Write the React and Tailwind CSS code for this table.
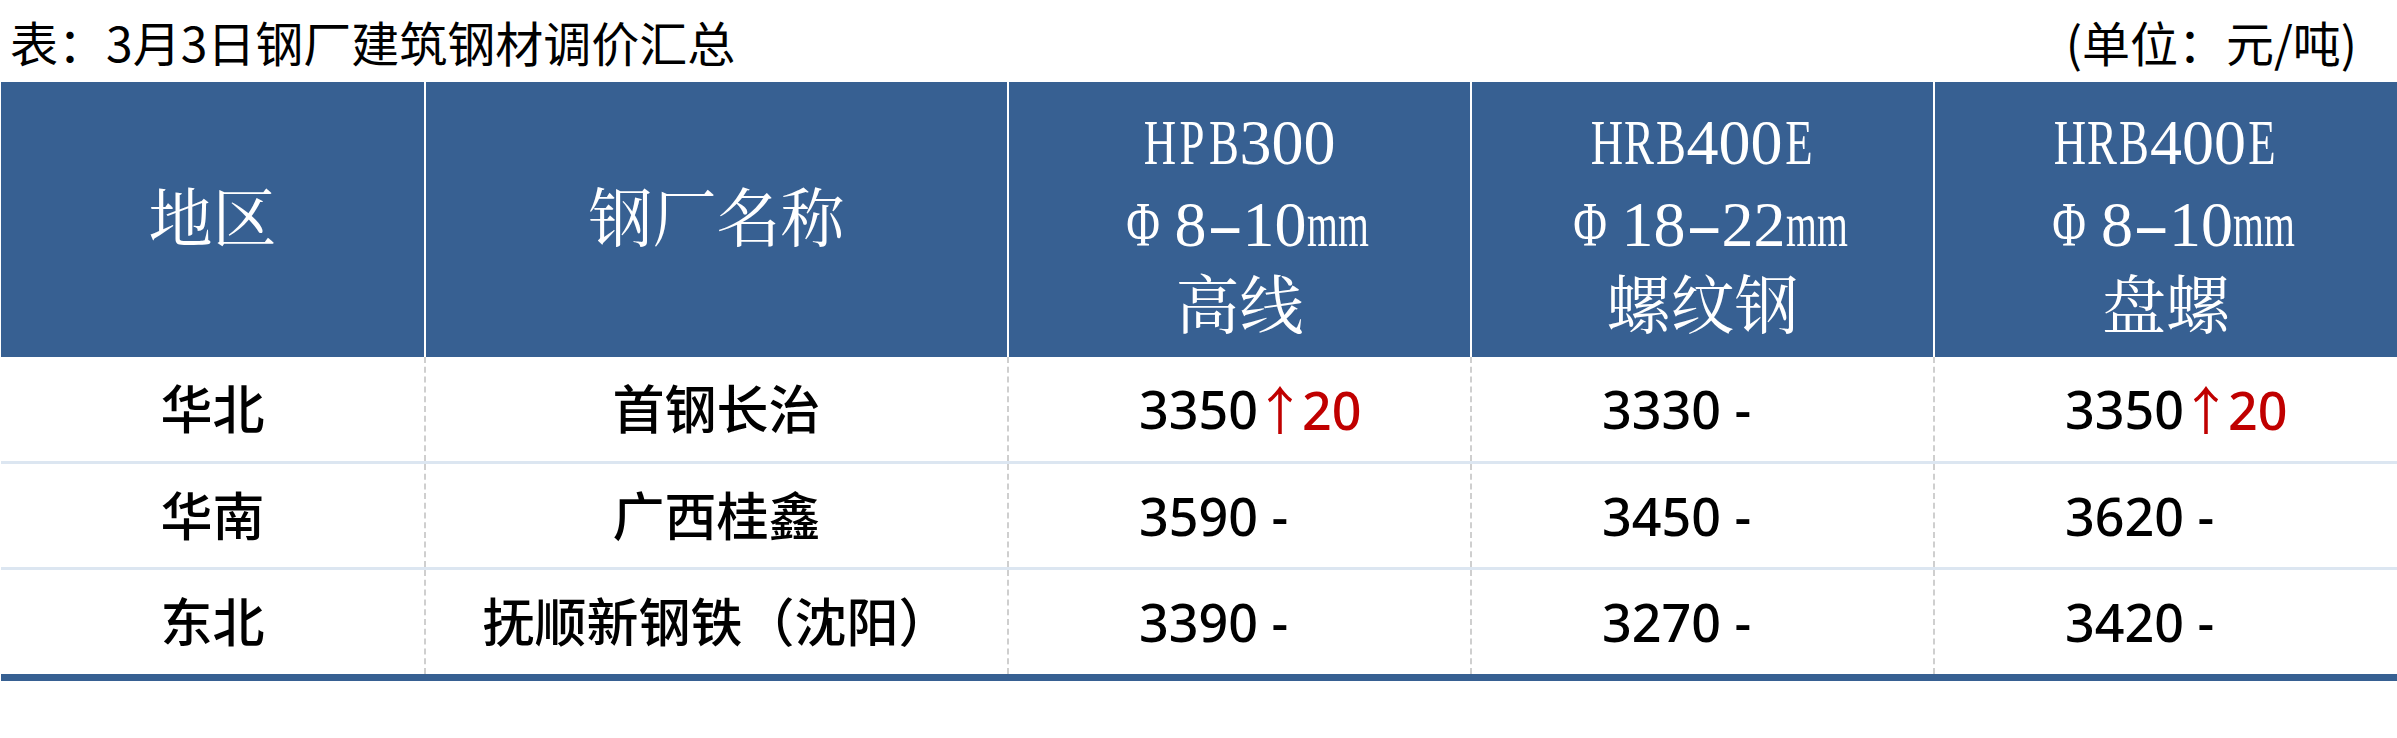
import React from 'react';

const COLS = 'grid grid-cols-[423px_583px_463px_463px_1fr]';

const rows = [
    { region: '华北', mill: '首钢长治', prices: [['3350', '20'], ['3330', null], ['3350', '20']] },
    { region: '华南', mill: '广西桂鑫', prices: [['3590', null], ['3450', null], ['3620', null]] },
    { region: '东北', mill: '抚顺新钢铁（沈阳）', prices: [['3390', null], ['3270', null], ['3420', null]] },
];

const heads = [
    { grade: 'HPB300', size: 'Φ8-10mm', kind: '高线' },
    { grade: 'HRB400E', size: 'Φ18-22mm', kind: '螺纹钢' },
    { grade: 'HRB400E', size: 'Φ8-10mm', kind: '盘螺' },
];

// half-width latin, like the song-style font of the sheet
function Grade({ text }) {
    return (
        <div className="flex h-[82px] justify-center">
            {text.split('').map((c, i) => (
                <span key={i} className={/[A-Z]/.test(c) ? 'flex w-[32px] justify-center scale-x-[0.7]' : 'flex w-[32px] justify-center'}>
                    {c}
                </span>
            ))}
        </div>
    );
}

function Size({ text }) {
    const cls = (c) => {
        if (c === 'Φ') return 'flex w-[64px] justify-center scale-x-[0.72]';
        if (c === '-') return 'flex w-[36px] justify-center scale-x-[1.7]';
        if (c === 'm') return 'flex w-[31px] justify-center scale-x-[0.62]';
        return 'flex w-[32px] justify-center';
    };
    return (
        <div className="flex h-[82px] justify-center">
            {text.split('').map((c, i) => (
                <span key={i} className={cls(c)}>{c}</span>
            ))}
        </div>
    );
}

function Price({ value, up }) {
    return (
        <div className="flex h-full items-center border-l-2 border-dashed border-[#cfcfcf] pl-[130px]">
            <span>{value}</span>
            {up ? (
                <span className="text-[#c00000]">
                    <span className="-mx-[4px] font-['Noto_Sans_CJK_SC',sans-serif] font-normal">↑</span>
                    {up}
                </span>
            ) : (
                <span>&nbsp;-</span>
            )}
        </div>
    );
}

export default function App() {
    return (
        <div className="h-[738px] w-[2397px] bg-white">
            <div className="flex h-[82px] items-center justify-between pl-[10px] pr-[40px] font-['Noto_Sans_CJK_SC',sans-serif] text-[48px] leading-[82px] text-black">
                <span>表：3月3日钢厂建筑钢材调价汇总</span>
                <span>(单位：元/吨)</span>
            </div>

            <div className="pl-px">
                {/* header */}
                <div className={`${COLS} h-[275px] bg-[#376092] font-['Liberation_Serif','Noto_Serif_CJK_SC','Noto_Sans_CJK_SC',serif] text-[64px] leading-[82px] text-white`}>
                    <div className="flex items-center justify-center">地区</div>
                    <div className="flex items-center justify-center border-l-2 border-white">钢厂名称</div>
                    {heads.map((h, i) => (
                        <div key={i} className="flex flex-col items-center justify-center border-l-2 border-white pt-[10px]">
                            <Grade text={h.grade} />
                            <Size text={h.size} />
                            <div className="h-[82px]">{h.kind}</div>
                        </div>
                    ))}
                </div>

                {/* body */}
                <div className="font-['Noto_Sans','Noto_Sans_CJK_SC',sans-serif] text-[52px] font-medium leading-[1.3] text-black">
                    {rows.map((r, i) => (
                        <div
                            key={r.region}
                            className={
                                i === 0
                                    ? `${COLS} h-[107px] border-b-[3px] border-[#dce6f1]`
                                    : i === 1
                                        ? `${COLS} h-[106px] border-b-[3px] border-[#dce6f1]`
                                        : `${COLS} h-[104px]`
                            }
                        >
                            <div className="flex items-center justify-center">{r.region}</div>
                            <div className="flex items-center justify-center border-l-2 border-dashed border-[#cfcfcf]">{r.mill}</div>
                            {r.prices.map(([v, up], j) => (
                                <Price key={j} value={v} up={up} />
                            ))}
                        </div>
                    ))}
                </div>
                <div className="h-[7px] bg-[#376092]" />
            </div>
        </div>
    );
}
